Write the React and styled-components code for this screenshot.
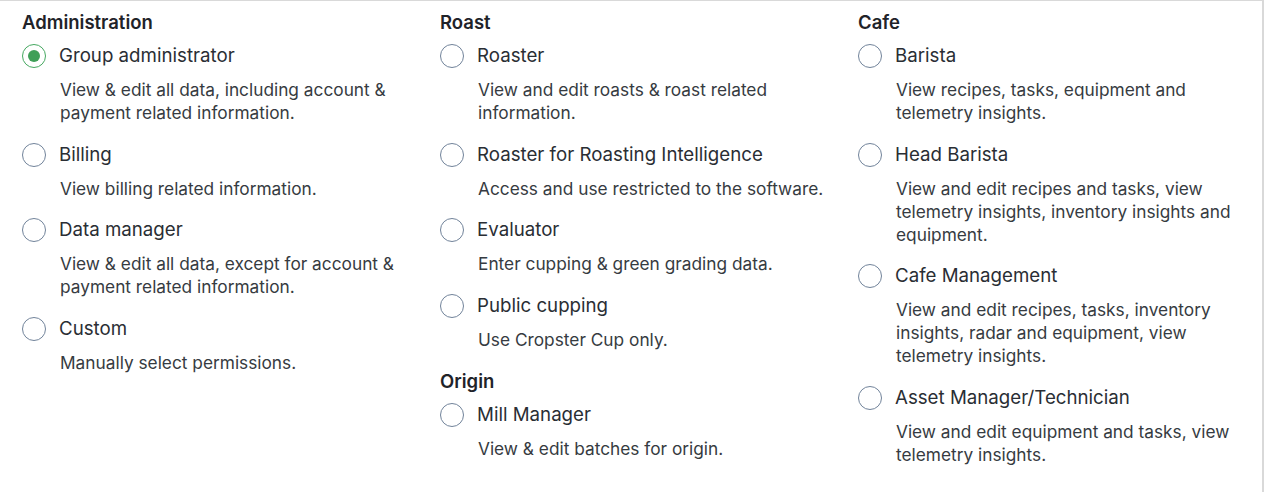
import React, { useState } from 'react';
import styled, { createGlobalStyle } from 'styled-components';

const GlobalStyle = createGlobalStyle`
  html, body {
    margin: 0;
    padding: 0;
    background: #ffffff;
  }
  body {
    font-family: 'Inter', 'Noto Sans', sans-serif;
    -webkit-font-smoothing: antialiased;
  }
`;

const Panel = styled.div`
  box-sizing: border-box;
  width: 1264px;
  height: 492px;
  border-top: 1px solid #d9d9d9;
  border-right: 2px solid #d9d9d9;
  padding: 9px 0 0 22px;
  display: grid;
  grid-template-columns: 418px 418px 1fr;
  align-items: start;
`;

const Column = styled.div`
  display: flex;
  flex-direction: column;
  gap: 18.5px;
`;

const Section = styled.div`
  display: flex;
  flex-direction: column;
`;

const Heading = styled.h3`
  margin: 0 0 10px;
  font-size: 18.5px;
  line-height: 24px;
  font-weight: 600;
  color: #1f2329;
`;

const Options = styled.div`
  display: flex;
  flex-direction: column;
  gap: 18.5px;
`;

const Option = styled.label`
  display: flex;
  flex-direction: column;
  cursor: pointer;
`;

const LabelRow = styled.div`
  display: flex;
  align-items: center;
  gap: 13px;
  height: 24px;
`;

const Radio = styled.span`
  box-sizing: border-box;
  width: 24px;
  height: 24px;
  flex: none;
  border-radius: 50%;
  border: 1.5px solid ${(p) => (p.checked ? '#45a860' : '#71839a')};
  display: flex;
  align-items: center;
  justify-content: center;
  &::after {
    content: '';
    width: 12px;
    height: 12px;
    border-radius: 50%;
    background: #3f9f58;
    display: ${(p) => (p.checked ? 'block' : 'none')};
  }
`;

const LabelText = styled.span`
  font-size: 18.7px;
  line-height: 24px;
  color: #2a2e34;
`;

const Description = styled.p`
  margin: 10px 0 0 38px;
  max-width: 352px;
  font-size: 17.3px;
  line-height: 23px;
  color: #363b41;
`;

const columns = [
  [
    {
      title: 'Administration',
      roles: [
        { id: 'group-admin', name: 'Group administrator', desc: 'View & edit all data, including account & payment related information.' },
        { id: 'billing', name: 'Billing', desc: 'View billing related information.' },
        { id: 'data-manager', name: 'Data manager', desc: 'View & edit all data, except for account & payment related information.' },
        { id: 'custom', name: 'Custom', desc: 'Manually select permissions.' }
      ]
    }
  ],
  [
    {
      title: 'Roast',
      roles: [
        { id: 'roaster', name: 'Roaster', desc: 'View and edit roasts & roast related information.' },
        { id: 'roaster-ri', name: 'Roaster for Roasting Intelligence', desc: 'Access and use restricted to the software.' },
        { id: 'evaluator', name: 'Evaluator', desc: 'Enter cupping & green grading data.' },
        { id: 'public-cupping', name: 'Public cupping', desc: 'Use Cropster Cup only.' }
      ]
    },
    {
      title: 'Origin',
      roles: [
        { id: 'mill-manager', name: 'Mill Manager', desc: 'View & edit batches for origin.' }
      ]
    }
  ],
  [
    {
      title: 'Cafe',
      roles: [
        { id: 'barista', name: 'Barista', desc: 'View recipes, tasks, equipment and telemetry insights.' },
        { id: 'head-barista', name: 'Head Barista', desc: 'View and edit recipes and tasks, view telemetry insights, inventory insights and equipment.' },
        { id: 'cafe-management', name: 'Cafe Management', desc: 'View and edit recipes, tasks, inventory insights, radar and equipment, view telemetry insights.' },
        { id: 'asset-manager', name: 'Asset Manager/Technician', desc: 'View and edit equipment and tasks, view telemetry insights.' }
      ]
    }
  ]
];

const App = () => {
  const [selected, setSelected] = useState('group-admin');

  return (
    <>
      <GlobalStyle />
      <Panel>
        {columns.map((sections, ci) => (
          <Column key={ci}>
            {sections.map((section) => (
              <Section key={section.title}>
                <Heading>{section.title}</Heading>
                <Options>
                  {section.roles.map((role) => (
                    <Option key={role.id} onClick={() => setSelected(role.id)}>
                      <LabelRow>
                        <Radio checked={selected === role.id} />
                        <LabelText>{role.name}</LabelText>
                      </LabelRow>
                      <Description>{role.desc}</Description>
                    </Option>
                  ))}
                </Options>
              </Section>
            ))}
          </Column>
        ))}
      </Panel>
    </>
  );
};

export default App;
